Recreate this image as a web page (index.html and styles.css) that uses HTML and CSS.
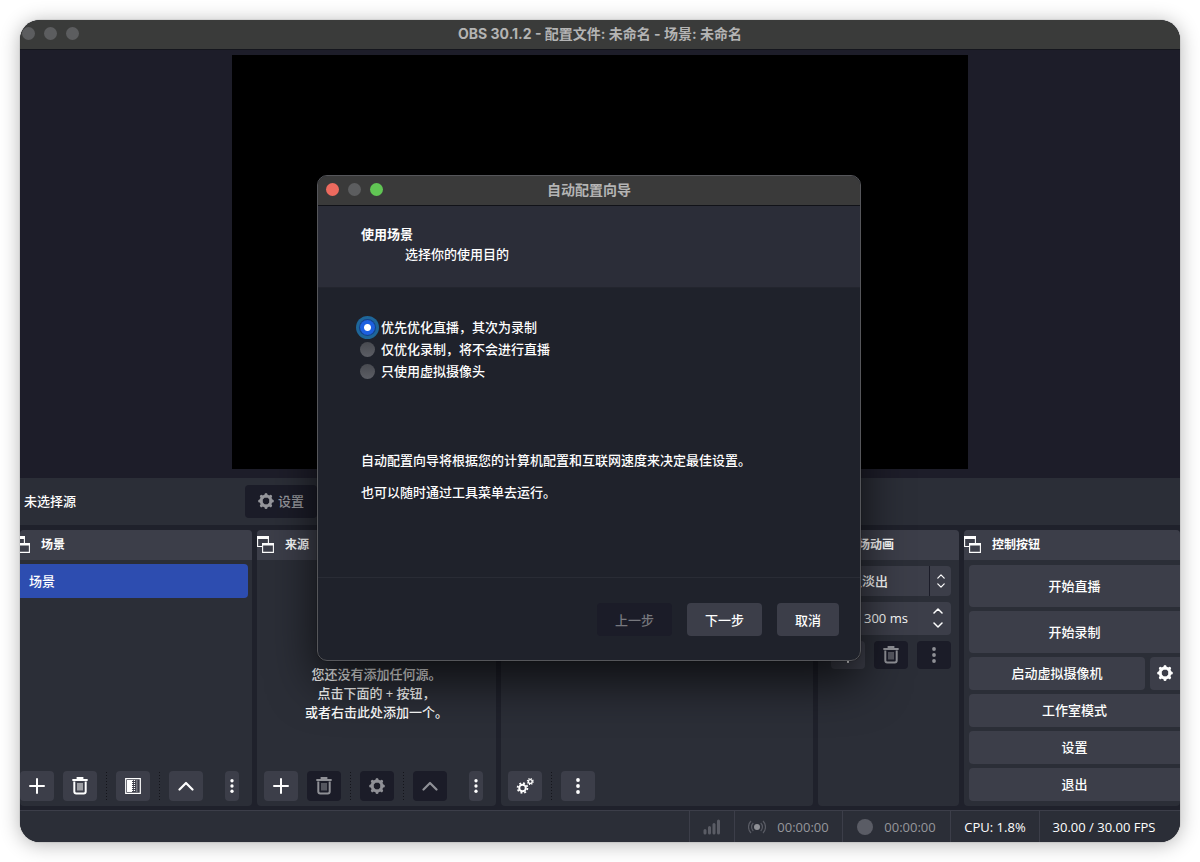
FILE: index.html
```html
<!DOCTYPE html>
<html lang="zh-CN">
<head>
<meta charset="utf-8">
<meta name="viewport" content="width=device-width, initial-scale=1">
<title>OBS 30.1.2</title>
<link rel="stylesheet" href="styles.css">
</head>
<body>
<svg class="defs" aria-hidden="true">
  <symbol id="i-float" viewBox="0 0 17 17"><path d="M0 0h12v3H0zM5 7h12v2.500H5z" fill="currentColor"/><path d="M5 10.500H.6V1M11.400 2v5M5.600 9v7.400h10.800V9" fill="none" stroke="currentColor" stroke-width="1.100"/></symbol>
  <symbol id="i-plus" viewBox="0 0 16 16"><path d="M8 1v14M1 8h14" fill="none" stroke="currentColor" stroke-width="2" stroke-linecap="round"/></symbol>
  <symbol id="i-trash" viewBox="0 0 18 18"><path d="M2 3h14M6.500 2.500V1h5v1.500" fill="none" stroke="currentColor" stroke-width="1.800" stroke-linecap="round"/><path d="M3.300 4.500v10a2 2 0 0 0 2 2h7.400a2 2 0 0 0 2-2v-10" fill="none" stroke="currentColor" stroke-width="2"/><path d="M7 6v7.500M9 6v7.500M11 6v7.500" fill="none" stroke="currentColor" stroke-width="1"/></symbol>
  <symbol id="i-up" viewBox="0 0 16 16"><path d="M1.500 11.500L8 5l6.500 6.500" fill="none" stroke="currentColor" stroke-width="2.200" stroke-linecap="round" stroke-linejoin="round"/></symbol>
  <symbol id="i-dots" viewBox="0 0 6 16"><circle cx="3" cy="2" r="1.900" fill="currentColor"/><circle cx="3" cy="8" r="1.900" fill="currentColor"/><circle cx="3" cy="14" r="1.900" fill="currentColor"/></symbol>
  <symbol id="i-gear" viewBox="0 0 16 16"><circle cx="8" cy="8" r="4.900" fill="none" stroke="currentColor" stroke-width="3"/><path d="M8 1.600v1.500M8 12.900v1.500M1.600 8h1.500M12.900 8h1.500M3.400 3.400l1 1M11.600 11.600l1 1M12.600 3.400l-1 1M4.400 11.600l-1 1" fill="none" stroke="currentColor" stroke-width="3" stroke-linecap="round"/></symbol>
  <symbol id="i-filter" viewBox="0 0 16 16"><path d="M.7 .7h14.600v14.600H.7z" fill="none" stroke="currentColor" stroke-width="1.200"/><path d="M2 2h5v12H2z" fill="currentColor"/><path d="M7.500 2v12M9.500 2v12" stroke="currentColor" stroke-width="1.200" stroke-dasharray="1 1"/><path d="M11 2h1.500v12H11z" fill="currentColor" opacity=".3"/></symbol>
  <symbol id="i-chev-up" viewBox="0 0 10 6"><path d="M1 5l4-4 4 4" fill="none" stroke="currentColor" stroke-width="1.500" stroke-linecap="round" stroke-linejoin="round"/></symbol>
  <symbol id="i-chev-down" viewBox="0 0 10 6"><path d="M1 1l4 4 4-4" fill="none" stroke="currentColor" stroke-width="1.500" stroke-linecap="round" stroke-linejoin="round"/></symbol>
</svg>

<div class="window">
  <header class="titlebar">
    <div class="lights"><i class="light"></i><i class="light"></i><i class="light"></i></div>
    <h1 class="title">OBS 30.1.2 - 配置文件: 未命名 - 场景: 未命名</h1>
  </header>

  <section class="preview" aria-label="预览"><div class="canvas"></div></section>

  <div class="source-bar">
    <span class="source-name">未选择源</span>
    <button class="source-settings" disabled><svg class="ic16"><use href="#i-gear"/></svg>设置</button>
  </div>

  <main class="docks">
    <section class="dock dock-scenes">
      <h2 class="dock-head"><svg class="ic17"><use href="#i-float"/></svg>场景</h2>
      <div class="dock-body">
        <button class="scene">场景</button>
      </div>
      <div class="tools">
        <button class="tool" aria-label="添加"><svg class="ic16"><use href="#i-plus"/></svg></button>
        <button class="tool" aria-label="移除"><svg class="ic18"><use href="#i-trash"/></svg></button>
        <i class="sep"></i>
        <button class="tool" aria-label="滤镜"><svg class="ic16"><use href="#i-filter"/></svg></button>
        <i class="sep"></i>
        <button class="tool" aria-label="上移"><svg class="ic16"><use href="#i-up"/></svg></button>
        <button class="tool tool-more" aria-label="更多"><svg class="dots"><use href="#i-dots"/></svg></button>
      </div>
    </section>

    <section class="dock">
      <h2 class="dock-head"><svg class="ic17"><use href="#i-float"/></svg>来源</h2>
      <div class="dock-body empty">
        <p class="empty-text">您还没有添加任何源。<br>点击下面的 + 按钮，<br>或者右击此处添加一个。</p>
      </div>
      <div class="tools tools-inset">
        <button class="tool" aria-label="添加"><svg class="ic16"><use href="#i-plus"/></svg></button>
        <button class="tool" aria-label="移除" disabled><svg class="ic18"><use href="#i-trash"/></svg></button>
        <i class="sep"></i>
        <button class="tool" aria-label="属性" disabled><svg class="ic16"><use href="#i-gear"/></svg></button>
        <i class="sep"></i>
        <button class="tool" aria-label="上移" disabled><svg class="ic16"><use href="#i-up"/></svg></button>
        <button class="tool tool-more" aria-label="更多"><svg class="dots"><use href="#i-dots"/></svg></button>
      </div>
    </section>

    <section class="dock" aria-label="混音器">
      <div class="dock-head"></div>
      <div class="dock-body"></div>
      <div class="tools tools-inset">
        <button class="tool" aria-label="高级音频属性"><svg class="ic18" viewBox="0 0 18 18"><g fill="none" stroke="currentColor"><circle cx="6.500" cy="11" r="3.300" stroke-width="2"/><circle cx="6.500" cy="11" r="4.900" stroke-width="1.800" stroke-dasharray="1.900 1.950"/><circle cx="14.300" cy="4.500" r="1.900" stroke-width="1.400"/><circle cx="14.300" cy="4.500" r="2.900" stroke-width="1.300" stroke-dasharray="1.150 1.130"/></g></svg></button>
        <i class="sep"></i>
        <button class="tool" aria-label="更多"><svg class="dots-lg"><use href="#i-dots"/></svg></button>
      </div>
    </section>

    <section class="dock">
      <h2 class="dock-head"><svg class="ic17"><use href="#i-float"/></svg>转场动画</h2>
      <div class="dock-body transitions">
        <div class="combo">
          <select class="combo-field" aria-label="转场"><option>淡入淡出</option></select>
          <span class="combo-arrows"><svg class="chev-sm"><use href="#i-chev-up"/></svg><svg class="chev-sm"><use href="#i-chev-down"/></svg></span>
        </div>
        <div class="spin">
          <input class="spin-field" type="text" value="300 ms" aria-label="时长">
          <div class="spin-arrows">
            <button class="spin-btn" aria-label="增加"><svg class="chev"><use href="#i-chev-up"/></svg></button>
            <button class="spin-btn" aria-label="减少"><svg class="chev"><use href="#i-chev-down"/></svg></button>
          </div>
        </div>
        <div class="trans-tools">
          <button class="tool" aria-label="添加转场"><svg class="ic16"><use href="#i-plus"/></svg></button>
          <button class="tool" aria-label="移除转场" disabled><svg class="ic18"><use href="#i-trash"/></svg></button>
          <button class="tool" aria-label="转场选项" disabled><svg class="dots-lg"><use href="#i-dots"/></svg></button>
        </div>
      </div>
    </section>

    <section class="dock">
      <h2 class="dock-head"><svg class="ic17"><use href="#i-float"/></svg>控制按钮</h2>
      <div class="dock-body controls">
        <button class="ctl ctl-tall">开始直播</button>
        <button class="ctl ctl-tall">开始录制</button>
        <div class="ctl-row">
          <button class="ctl">启动虚拟摄像机</button>
          <button class="ctl ctl-gear" aria-label="虚拟摄像机设置"><svg class="ic16"><use href="#i-gear"/></svg></button>
        </div>
        <button class="ctl">工作室模式</button>
        <button class="ctl">设置</button>
        <button class="ctl">退出</button>
      </div>
    </section>
  </main>

  <footer class="status">
    <div class="cell cell-signal"><svg class="signal" viewBox="0 0 18 16"><path d="M2 11.500V14M6.500 8.500V14M11 5.500V14M15.500 2V14" fill="none" stroke="currentColor" stroke-width="3" stroke-linecap="round"/></svg></div>
    <div class="cell cell-time"><svg class="live" viewBox="0 0 18 16"><circle cx="9" cy="8" r="3" fill="#8f9096"/><path d="M5.300 4a5.500 5.500 0 0 0 0 8M12.700 4a5.500 5.500 0 0 1 0 8M3 2a8.500 8.500 0 0 0 0 12M15 2a8.500 8.500 0 0 1 0 12" fill="none" stroke="currentColor" stroke-width="1.200"/></svg><span>00:00:00</span></div>
    <div class="cell cell-time"><i class="rec"></i><span>00:00:00</span></div>
    <div class="cell cell-cpu">CPU: 1.8%</div>
    <div class="cell cell-fps">30.00 / 30.00 FPS</div>
  </footer>

  <form class="dialog" role="dialog" aria-labelledby="wizard-title">
    <div class="dialog-bar">
      <div class="lights lights-dialog"><i class="light light-red"></i><i class="light"></i><i class="light light-green"></i></div>
      <h2 class="title" id="wizard-title">自动配置向导</h2>
    </div>
    <div class="dialog-head">
      <h3 class="step-title">使用场景</h3>
      <p class="step-sub">选择你的使用目的</p>
    </div>
    <div class="dialog-body">
      <label class="choice"><input class="radio" type="radio" name="usage" checked>优先优化直播，其次为录制</label>
      <label class="choice"><input class="radio" type="radio" name="usage">仅优化录制，将不会进行直播</label>
      <label class="choice"><input class="radio" type="radio" name="usage">只使用虚拟摄像头</label>
      <div class="notes">
        <p class="note">自动配置向导将根据您的计算机配置和互联网速度来决定最佳设置。</p>
        <p class="note">也可以随时通过工具菜单去运行。</p>
      </div>
    </div>
    <div class="dialog-foot">
      <button class="btn" type="button" disabled>上一步</button>
      <button class="btn" type="button">下一步</button>
      <button class="btn btn-narrow" type="button">取消</button>
    </div>
  </form>
</div>
</body>
</html>
```
FILE: styles.css
```css
* { box-sizing: border-box; }

body {
  margin: 0;
  padding: 20px;
  min-height: 100vh;
  display: flex;
  background: #fff;
  color: #fefefe;
  font: 500 13px/20px "Open Sans", "Noto Sans CJK SC", sans-serif;
}

h1, h2, h3, p { margin: 0; }

button, input, select {
  margin: 0;
  border: 0;
  padding: 0;
  color: inherit;
  font: inherit;
}

.defs { position: absolute; width: 0; height: 0; }
.ic16 { width: 16px; height: 16px; flex: none; }
.ic17 { width: 17px; height: 17px; flex: none; }
.ic18 { width: 18px; height: 18px; flex: none; }
.dots { width: 6px; height: 14px; }
.dots-lg { width: 6px; height: 18px; }

.window {
  position: relative;
  flex: 1;
  min-width: 0;
  display: flex;
  flex-direction: column;
  overflow: hidden;
  border-radius: 20px;
  background: #1f212b;
  box-shadow: 0 0 1px #555, 0 2px 20px rgba(0, 0, 0, .3);
}

/* Title bars */
.titlebar {
  display: grid;
  grid-template-columns: 80px 1fr 80px;
  align-items: center;
  height: 30px;
  padding-bottom: 2px;
  background: #3a3b3a;
  border-bottom: 1px solid #15161d;
}
.title {
  text-align: center;
  font: 700 14px/20px Inter, "Noto Sans CJK SC", sans-serif;
  color: #b4b4b4;
}
.lights { display: flex; gap: 9px; padding-left: 2px; }
.light { width: 13px; height: 13px; border-radius: 50%; background: #5c5d5f; }
.light-red { background: #ed6a5e; }
.light-green { background: #61c554; }

/* Preview */
.preview {
  display: flex;
  justify-content: center;
  padding: 5px 0 9px;
  background: #1d1d29;
}
.canvas { width: 63.4%; aspect-ratio: 16 / 9; background: #000; }

.source-bar {
  display: flex;
  align-items: center;
  height: 47px;
  padding-left: 4px;
  background: #2b2e37;
}
.source-name { width: 221px; }
.source-settings {
  display: flex;
  align-items: center;
  gap: 4px;
  height: 33px;
  padding: 0 13px;
  border-radius: 4px;
  background: #1b1c28;
  color: #96979c;
}

/* Docks */
.docks {
  flex: 1;
  display: grid;
  grid-template-columns: 232fr 239fr 312fr 141fr 216fr;
  gap: 5px;
  padding: 5px 0 4px;
}
.dock {
  min-width: 0;
  display: flex;
  flex-direction: column;
  overflow: hidden;
  border-radius: 4px;
  background: #2b2e37;
}
.dock-head {
  display: flex;
  align-items: center;
  gap: 11px;
  height: 30px;
  background: #3c3e49;
  font-size: 12px;
  font-weight: 700;
}
.dock-scenes .ic17 { margin-left: -7px; }
.dock-body { flex: 1; }

.scene {
  width: calc(100% - 4px);
  height: 34px;
  margin-top: 4px;
  padding-left: 9px;
  border-radius: 0 4px 4px 0;
  background: #2d4db0;
  text-align: left;
}

.empty {
  display: flex;
  align-items: flex-end;
  justify-content: center;
  padding-bottom: 49px;
}
.empty-text { text-align: center; line-height: 19px; }

.tools { display: flex; align-items: center; gap: 9px; padding: 0 13px 5px 0; }
.tools-inset { padding-left: 7px; }
.tool {
  display: flex;
  align-items: center;
  justify-content: center;
  width: 34px;
  height: 30px;
  border-radius: 4px;
  background: #3c3e49;
}
.tool:disabled { background: #1b1c28; color: #8f9096; }
.tool-more { width: 14px; margin-left: auto; }
.sep {
  width: 1px;
  height: 28px;
  background: repeating-linear-gradient(#14151b 0 1px, #2b2e37 1px 3px);
}

/* Transitions */
.transitions { display: flex; flex-direction: column; gap: 6px; padding: 6px 8px 0; }
.combo { position: relative; display: flex; }
.combo-field {
  width: 100%;
  height: 30px;
  padding-left: 10px;
  appearance: none;
  border-radius: 4px;
  background: #3c3e49;
}
.combo-arrows {
  position: absolute;
  top: 0;
  right: 0;
  bottom: 0;
  width: 22px;
  display: flex;
  flex-direction: column;
  align-items: center;
  justify-content: center;
  gap: 4px;
  border-left: 1px solid #1b1c28;
  pointer-events: none;
}
.chev-sm { width: 8px; height: 5px; }
.chev { width: 10px; height: 6px; }
.spin {
  display: flex;
  height: 33px;
  margin-left: 29px;
  border-radius: 4px;
  background: #3c3e49;
}
.spin-field { flex: 1; min-width: 0; padding-left: 9px; background: none; }
.spin-arrows { display: flex; flex-direction: column; width: 26px; padding: 3px 0; }
.spin-btn { flex: 1; display: flex; align-items: center; justify-content: center; background: none; }
.trans-tools { display: flex; justify-content: flex-end; gap: 9px; }
.trans-tools .tool { height: 28px; }

/* Controls: the column runs on past the right edge of the window */
.controls { display: flex; flex-direction: column; gap: 4px; padding: 5px 0 0 5px; }
.ctl {
  flex: none;
  height: 33px;
  border-radius: 4px 0 0 4px;
  background: #3c3e49;
}
.ctl-tall { height: 42px; }
.ctl-row { display: flex; gap: 5px; }
.ctl-row .ctl { flex: 1; border-radius: 4px; }
.ctl-row .ctl-gear {
  flex: none;
  width: 30px;
  display: flex;
  align-items: center;
  justify-content: center;
  border-radius: 4px 0 0 4px;
}

/* Status bar */
.status {
  display: flex;
  justify-content: flex-end;
  height: 32px;
  border-top: 1px solid #3c3e49;
  background: #2b2e37;
}
.cell {
  display: flex;
  align-items: center;
  justify-content: center;
  border-left: 1px solid #3c3e49;
}
.cell-signal { width: 45px; color: #5a5c65; }
.cell-time { width: 108px; gap: 11px; color: #96979c; }
.cell-cpu { width: 89px; }
.cell-fps { width: 141px; padding-right: 12px; }
.signal, .live { width: 18px; height: 16px; }
.live { color: #5a5c65; }
.rec { width: 16px; height: 16px; border-radius: 50%; background: #5a5c65; }

/* Wizard window */
.dialog {
  position: absolute;
  top: 155px;
  left: 297px;
  width: 544px;
  overflow: hidden;
  border: 1px solid #55565a;
  border-radius: 10px;
  background: #1f222b;
  box-shadow: 0 0 1px #000, 0 20px 48px rgba(0, 0, 0, .7);
}
.dialog-bar {
  display: grid;
  grid-template-columns: 80px 1fr 80px;
  align-items: center;
  height: 30px;
  padding-bottom: 2px;
  background: #3a3a3a;
  border-bottom: 1px solid #111218;
}
.lights-dialog { padding-left: 8px; }
.dialog-head {
  height: 82px;
  padding: 18px 43px 0;
  background: #2b2d38;
  border-bottom: 1px solid #23252e;
}
.step-title { font-size: 13px; line-height: 20px; }
.step-sub { padding-left: 44px; }
.dialog-body { height: 289px; padding: 28px 42px 0; }
.choice { display: flex; align-items: center; gap: 6px; height: 22px; }
.radio {
  appearance: none;
  width: 15px;
  height: 15px;
  border-radius: 50%;
  background: linear-gradient(#484a50, #5c5e65);
}
.radio:checked {
  background: radial-gradient(circle, #fff 3px, #1d60e0 4px);
  box-shadow: 0 0 0 1px #123f8c, 0 0 0 4px #1e6699;
}
.notes { display: grid; gap: 12px; margin-top: 68px; padding-left: 1px; }
.dialog-foot {
  display: flex;
  justify-content: flex-end;
  gap: 15px;
  padding: 25px 21px 24px;
  border-top: 1px solid #292c35;
}
.btn {
  width: 75px;
  height: 33px;
  border-radius: 4px;
  background: #3c3e49;
}
.btn:disabled { background: #1b1c28; color: #77787e; }
.btn-narrow { width: 62px; }
```
